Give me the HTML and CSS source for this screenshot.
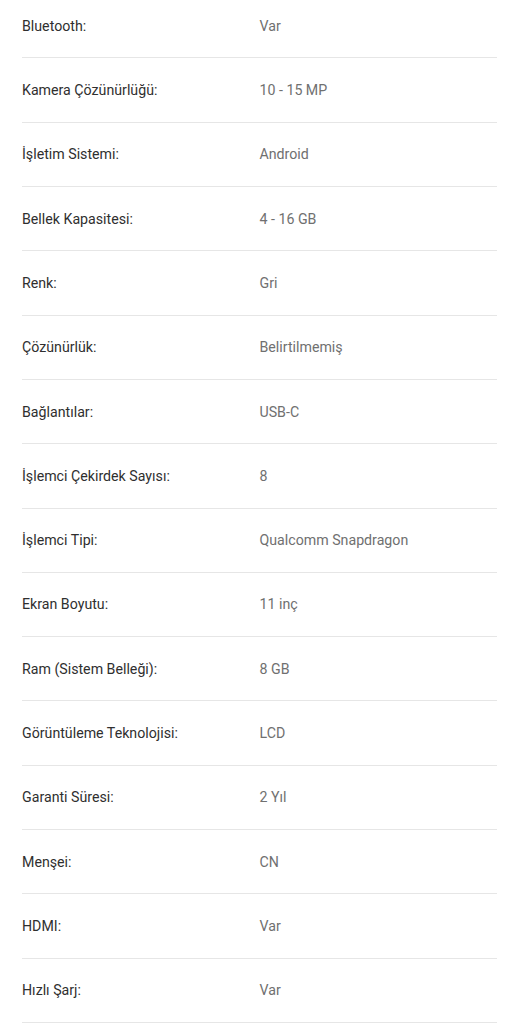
FILE: index.html
```html
<!DOCTYPE html>
<html lang="tr">
<head>
  <meta charset="UTF-8">
  <meta name="viewport" content="width=device-width, initial-scale=1.0">
  <title>Ürün Özellikleri</title>
  <link rel="stylesheet" href="styles.css">
</head>
<body>
  <div class="specs">
    <div class="row"><span class="label">Bluetooth:</span><span class="value">Var</span></div>
    <div class="row"><span class="label">Kamera Çözünürlüğü:</span><span class="value">10 - 15 MP</span></div>
    <div class="row"><span class="label">İşletim Sistemi:</span><span class="value">Android</span></div>
    <div class="row"><span class="label">Bellek Kapasitesi:</span><span class="value">4 - 16 GB</span></div>
    <div class="row"><span class="label">Renk:</span><span class="value">Gri</span></div>
    <div class="row"><span class="label">Çözünürlük:</span><span class="value">Belirtilmemiş</span></div>
    <div class="row"><span class="label">Bağlantılar:</span><span class="value">USB-C</span></div>
    <div class="row"><span class="label">İşlemci Çekirdek Sayısı:</span><span class="value">8</span></div>
    <div class="row"><span class="label">İşlemci Tipi:</span><span class="value">Qualcomm Snapdragon</span></div>
    <div class="row"><span class="label">Ekran Boyutu:</span><span class="value">11 inç</span></div>
    <div class="row"><span class="label">Ram (Sistem Belleği):</span><span class="value">8 GB</span></div>
    <div class="row"><span class="label">Görüntüleme Teknolojisi:</span><span class="value">LCD</span></div>
    <div class="row"><span class="label">Garanti Süresi:</span><span class="value">2 Yıl</span></div>
    <div class="row"><span class="label">Menşei:</span><span class="value">CN</span></div>
    <div class="row"><span class="label">HDMI:</span><span class="value">Var</span></div>
    <div class="row"><span class="label">Hızlı Şarj:</span><span class="value">Var</span></div>
  </div>
</body>
</html>
```

FILE: styles.css
```css
body { margin: 0; padding: 0; background: #fff; font-family: Roboto, "Liberation Sans", Arial, sans-serif; font-size: 14.2px; line-height: 20px; overflow: hidden; }
.specs { margin: -6px 22px 0; }
.row { display: grid; grid-template-columns: 1fr 1fr; padding: 21.67px 0; border-bottom: 1px solid #e6e6e6; }
.label { color: #2f2f2f; }
.value { color: #707070; }
```
